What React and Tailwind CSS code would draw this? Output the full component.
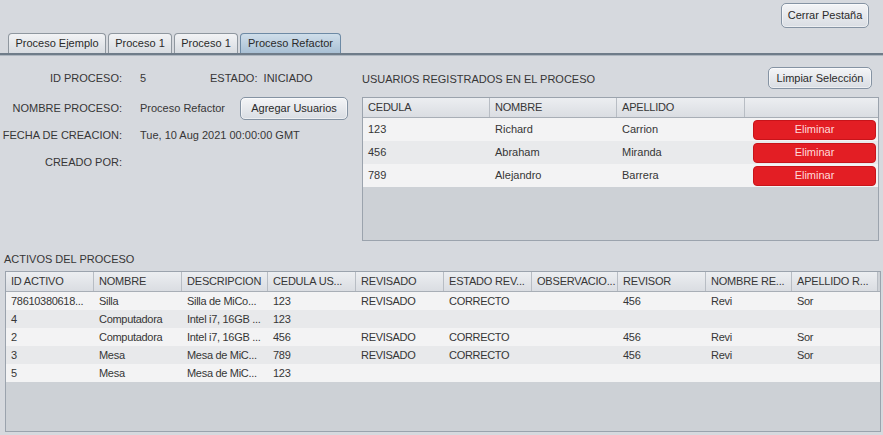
import React from 'react'

const font = { fontFamily: '"Liberation Sans", Arial, sans-serif' }

const tabs = [
  { label: 'Proceso Ejemplo', w: 'w-[98px]' },
  { label: 'Proceso 1', w: 'w-[64px]' },
  { label: 'Proceso 1', w: 'w-[64px]' },
  { label: 'Proceso Refactor', w: 'w-[101px]', active: true },
]

const usuarios = [
  { cedula: '123', nombre: 'Richard', apellido: 'Carrion' },
  { cedula: '456', nombre: 'Abraham', apellido: 'Miranda' },
  { cedula: '789', nombre: 'Alejandro', apellido: 'Barrera' },
]

const activoCols = [
  { label: 'ID ACTIVO', w: 'w-[88px]' },
  { label: 'NOMBRE', w: 'w-[88px]' },
  { label: 'DESCRIPCION', w: 'w-[86px]' },
  { label: 'CEDULA US...', w: 'w-[88px]' },
  { label: 'REVISADO', w: 'w-[88px]' },
  { label: 'ESTADO REV...', w: 'w-[88px]' },
  { label: 'OBSERVACIO...', w: 'w-[86px]' },
  { label: 'REVISOR', w: 'w-[88px]' },
  { label: 'NOMBRE RE...', w: 'w-[86px]' },
  { label: 'APELLIDO R...', w: 'w-[86px]' },
]

const activos = [
  ['78610380618...', 'Silla', 'Silla de MiCo...', '123', 'REVISADO', 'CORRECTO', '', '456', 'Revi', 'Sor'],
  ['4', 'Computadora', 'Intel i7, 16GB ...', '123', '', '', '', '', '', ''],
  ['2', 'Computadora', 'Intel i7, 16GB ...', '456', 'REVISADO', 'CORRECTO', '', '456', 'Revi', 'Sor'],
  ['3', 'Mesa', 'Mesa de MiC...', '789', 'REVISADO', 'CORRECTO', '', '456', 'Revi', 'Sor'],
  ['5', 'Mesa', 'Mesa de MiC...', '123', '', '', '', '', '', ''],
]

function NimbusButton({ children, className = '' }) {
  return (
    <button
      type="button"
      className={`rounded-[5px] border border-[#8593a3] bg-gradient-to-b from-[#f4f5f7] to-[#d9dde3] text-[11px] text-[#2a2a2a] shadow-[inset_0_0_0_1px_#ffffff80] ${className}`}
    >
      {children}
    </button>
  )
}

function HeaderCell({ children, className = '' }) {
  return (
    <div className={`h-full flex items-center px-[5px] border-r border-[#b8bdc4] bg-gradient-to-b from-[#eceef1] to-[#dadde2] overflow-hidden whitespace-nowrap tracking-[-0.2px] ${className}`}>
      {children}
    </div>
  )
}

export default function App() {
  return (
    <div style={font} className="w-[883px] h-[435px] bg-[#d6d9de] text-[11px] text-[#363636] overflow-hidden flex flex-col">
      <div className="h-[33px] flex items-start justify-end pr-[14px] pt-[3px]">
        <NimbusButton className="w-[88px] h-[25px]">Cerrar Pestaña</NimbusButton>
      </div>

      <div className="h-[20px] flex items-end gap-[2px] pl-[8px]">
        {tabs.map((t, i) => (
          <div
            key={i}
            className={`${t.w} h-[20px] flex items-center justify-center rounded-t-[4px] border border-b-0 ${
              t.active
                ? 'border-[#6d8aa5] bg-gradient-to-b from-[#cfdeea] to-[#a9c0d4] text-[#2a2a2a]'
                : 'border-[#8f979f] bg-gradient-to-b from-[#f2f3f5] to-[#d8dce1] text-[#2a2a2a]'
            }`}
          >
            {t.label}
          </div>
        ))}
      </div>
      <div className="h-[2px] bg-[#6f7c89]" />
      <div className="h-px bg-[#aeb6bf]" />

      <div className="flex-1 flex flex-col">
        <div className="flex h-[191px]">
          <div className="w-[358px] pt-[14px]">
            <div className="grid grid-cols-[122px_1fr] gap-x-[18px]">
              <div className="h-[17px] flex items-center justify-end">ID PROCESO:</div>
              <div className="h-[17px] flex items-center">
                <span className="w-[70px]">5</span>
                <span>ESTADO:&nbsp; INICIADO</span>
              </div>
              <div className="h-[23px] mt-[10px] flex items-center justify-end">NOMBRE PROCESO:</div>
              <div className="h-[23px] mt-[10px] flex items-center">
                <span className="w-[100px]">Proceso Refactor</span>
                <NimbusButton className="w-[108px] h-[23px]">Agregar Usuarios</NimbusButton>
              </div>
              <div className="h-[17px] mt-[7px] flex items-center justify-end">FECHA DE CREACION:</div>
              <div className="h-[17px] mt-[7px] flex items-center">Tue, 10 Aug 2021 00:00:00 GMT</div>
              <div className="h-[17px] mt-[10px] flex items-center justify-end">CREADO POR:</div>
              <div className="h-[17px] mt-[10px]" />
            </div>
          </div>

          <div className="flex-1 flex flex-col pr-[3px] pl-[4px]">
            <div className="h-[41px] flex items-start justify-between pt-[11px]">
              <span className="mt-[4px]">USUARIOS REGISTRADOS EN EL PROCESO</span>
              <NimbusButton className="w-[104px] h-[22px] mr-[8px]">Limpiar Selección</NimbusButton>
            </div>
            <div className="w-[517px] h-[144px] border border-[#9ba3ad] bg-[#cdd1d6] flex flex-col">
              <div className="h-[20px] flex border-b border-[#a8aeb6] shrink-0">
                <HeaderCell className="w-[127px]">CEDULA</HeaderCell>
                <HeaderCell className="w-[127px]">NOMBRE</HeaderCell>
                <HeaderCell className="w-[128px]">APELLIDO</HeaderCell>
                <HeaderCell className="flex-1 border-r-0" />
              </div>
              {usuarios.map((u, i) => (
                <div key={u.cedula} className={`h-[23px] flex items-center ${i % 2 ? 'bg-[#e9eaec]' : 'bg-[#f3f3f4]'}`}>
                  <div className="w-[127px] px-[5px]">{u.cedula}</div>
                  <div className="w-[127px] px-[5px]">{u.nombre}</div>
                  <div className="w-[128px] px-[5px]">{u.apellido}</div>
                  <div className="flex-1 pl-[8px] pr-[2px]">
                    <div className="h-[20px] rounded-[4px] bg-[#e31e24] border border-[#c8141a] text-[#ffd9d9] flex items-center justify-center">
                      Eliminar
                    </div>
                  </div>
                </div>
              ))}
            </div>
          </div>
        </div>

        <div className="h-[24px] flex items-center pl-[4px]">ACTIVOS DEL PROCESO</div>

        <div className="ml-[5px] w-[876px] flex-1 mb-[3px] border border-[#9ba3ad] bg-[#cdd1d6] flex flex-col">
          <div className="h-[20px] flex border-b border-[#a8aeb6] shrink-0">
            {activoCols.map((c) => (
              <HeaderCell key={c.label} className={c.w}>{c.label}</HeaderCell>
            ))}
          </div>
          {activos.map((row, i) => (
            <div key={i} className={`h-[18px] flex items-center shrink-0 ${i % 2 ? 'bg-[#e8e9eb]' : 'bg-[#f3f3f4]'}`}>
              {row.map((v, j) => (
                <div key={j} className={`${activoCols[j].w} px-[5px] overflow-hidden whitespace-nowrap tracking-[-0.3px]`}>{v}</div>
              ))}
            </div>
          ))}
        </div>
      </div>
    </div>
  )
}
